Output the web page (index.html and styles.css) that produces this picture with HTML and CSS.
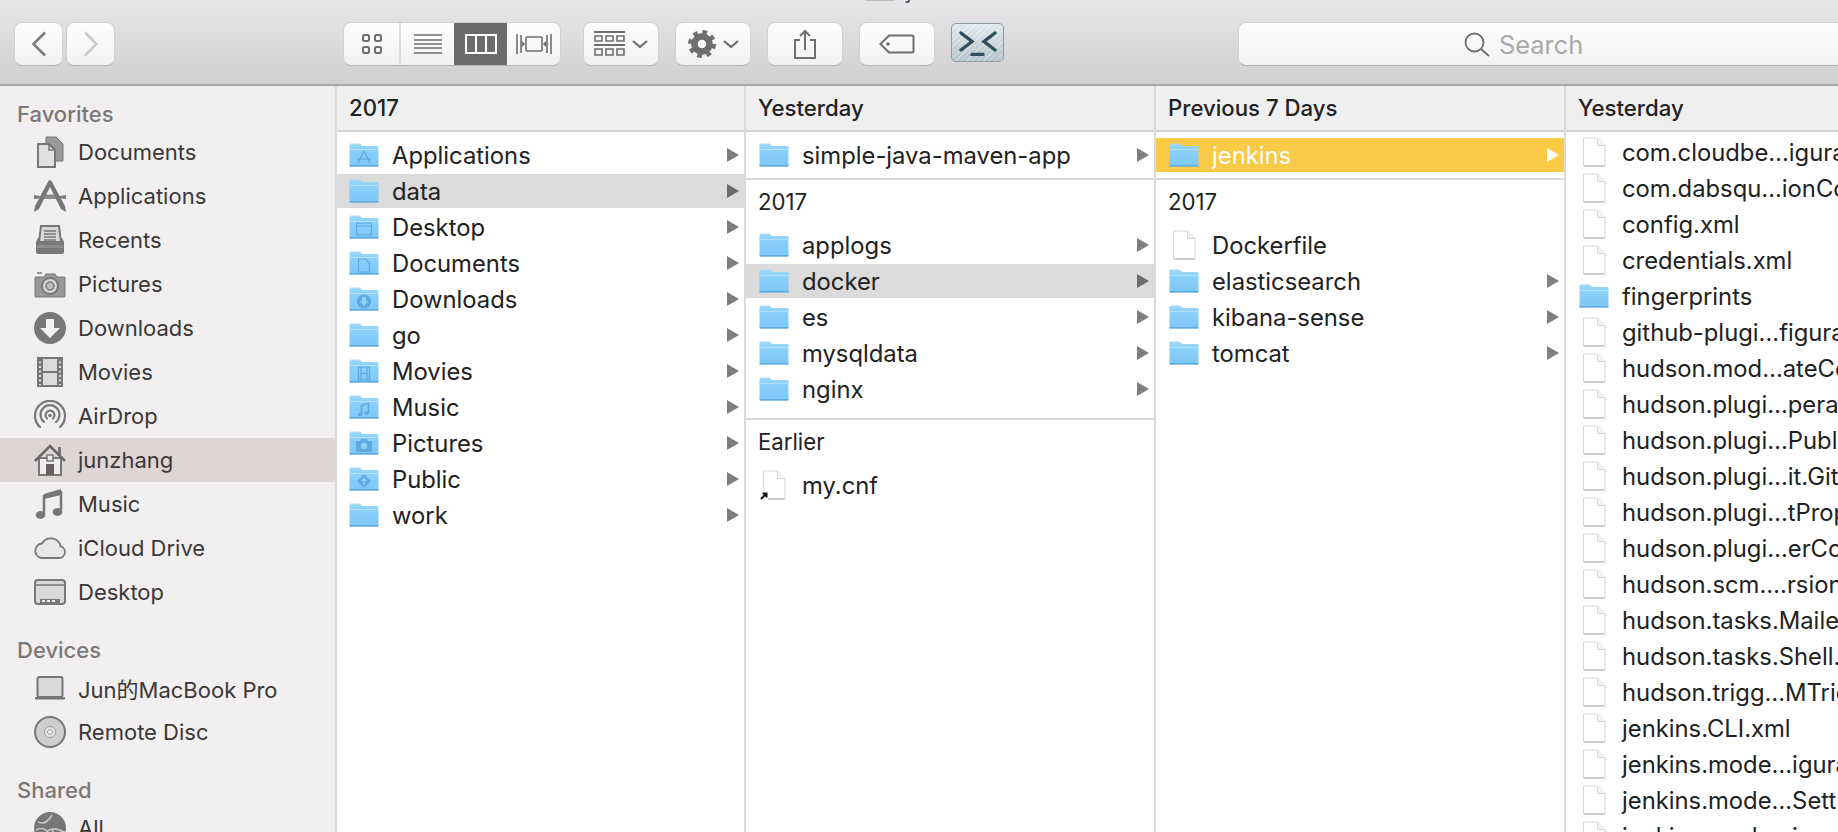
FILE: index.html
```html
<!DOCTYPE html>
<html lang="en">
<head>
  <meta charset="UTF-8">
  <title>Finder</title>
  <link rel="stylesheet" href="styles.css">
</head>
<body>
  <svg class="sprite" width="0" height="0">
    <defs>
      <linearGradient id="blue" x1="0" y1="0" x2="0" y2="1">
        <stop offset="0" stop-color="#a5dbfb"/>
        <stop offset="0.2" stop-color="#8ed2fa"/>
        <stop offset="1" stop-color="#7cc6f7"/>
      </linearGradient>
      <!-- folders -->
      <symbol id="folder" viewBox="0 0 30 24">
        <path d="M0.5 22.5V2a1.5 1.5 0 0 1 1.5-1.5h8.5L13.5 3H28.5A1 1 0 0 1 29.5 4V22.5a1 1 0 0 1-1 1H1.5a1 1 0 0 1-1-1z" fill="url(#blue)"/>
        <path d="M0.5 6.5H29.5" stroke="#b4e1fb" stroke-width="1"/>
        <path d="M0.5 22.8H29.5" stroke="#5fa6d8" stroke-width="1.4"/>
      </symbol>
      <symbol id="folder-app" viewBox="0 0 30 24">
        <use href="#folder"/>
        <path d="M15 8L9 20M15 8l6 12M8 16h14" fill="none" stroke="#5da9e6" stroke-width="1.2"/>
      </symbol>
      <symbol id="folder-desktop" viewBox="0 0 30 24">
        <use href="#folder"/>
        <path d="M7.5 8h15v12h-15zM7.5 11h15" fill="none" stroke="#5da9e6" stroke-width="1.2"/>
      </symbol>
      <symbol id="folder-docs" viewBox="0 0 30 24">
        <use href="#folder"/>
        <path d="M9.5 8h7l4 4v9h-11z" fill="none" stroke="#5da9e6" stroke-width="1.2"/>
      </symbol>
      <symbol id="folder-down" viewBox="0 0 30 24">
        <use href="#folder"/>
        <circle cx="15" cy="14.5" r="7" fill="#5da9e6"/>
        <path d="M13 10h4v4h2.5L15 19l-4.500-5H13z" fill="#8ed2fa"/>
      </symbol>
      <symbol id="folder-movies" viewBox="0 0 30 24">
        <use href="#folder"/>
        <path d="M9.500 8h11v13h-11zM12 8v13M18 8v13M12 14.500h6" fill="none" stroke="#5da9e6" stroke-width="1.200"/>
      </symbol>
      <symbol id="folder-music" viewBox="0 0 30 24">
        <use href="#folder"/>
        <path d="M12.500 10l7-1.500v9M12.500 10v9" fill="none" stroke="#5da9e6" stroke-width="1.500"/>
        <ellipse cx="11" cy="19.500" rx="2.300" ry="1.800" fill="#5da9e6"/>
        <ellipse cx="18" cy="18" rx="2.300" ry="1.800" fill="#5da9e6"/>
      </symbol>
      <symbol id="folder-pics" viewBox="0 0 30 24">
        <use href="#folder"/>
        <path d="M7 10h4l1-2h6l1 2h4v11H7z" fill="#5da9e6"/>
        <circle cx="15" cy="15" r="3.800" fill="#8ed2fa" stroke="#5da9e6"/>
      </symbol>
      <symbol id="folder-public" viewBox="0 0 30 24">
        <use href="#folder"/>
        <path d="M15 7l7 7-7 7-7-7z" fill="#5da9e6"/>
        <path d="M15 10.500v7M12.500 14l2.500-2 2.500 2" fill="none" stroke="#a5dbfb" stroke-width="1.200"/>
      </symbol>
      <!-- files -->
      <symbol id="file" viewBox="0 0 24 30">
        <path d="M1.500 1h14L23 8.500V28.500H1.500z" fill="#fff" stroke="#d6d6d6"/>
        <path d="M15.500 1v7.500H23" fill="#f3f3f3" stroke="#d6d6d6"/>
        <path d="M1.500 29.300H23" stroke="#bdbdbd"/>
      </symbol>
      <symbol id="file-alias" viewBox="0 0 30 30">
        <use href="#file" x="3" width="24" height="30"/>
        <rect x="0" y="21" width="9" height="9" fill="#fff"/>
        <path d="M2 29l5-5M3.500 23.500H7.500V27.500" fill="none" stroke="#111" stroke-width="2"/>
      </symbol>
      <!-- sidebar -->
      <symbol id="s-docs" viewBox="0 0 32 32">
        <path d="M12 1h10l7 7v17h-8V13l-6-5h-3z" fill="#9a9a9a" stroke="#777"/>
        <path d="M4 8h11l6 6v17H4z" fill="#e2e0e0" stroke="#777" stroke-width="2"/>
        <path d="M15 8v6h6" fill="none" stroke="#777" stroke-width="1.500"/>
      </symbol>
      <symbol id="s-apps" viewBox="0 0 32 32">
        <path d="M0 15l8 1.500h16l8-1.500v4l-8-1H8l-8 1z" fill="#777"/>
        <path d="M10 14.500h12l2 4.500H8z" fill="#8a8a8a"/>
        <path d="M15 0l3 3L5 29l-5 3 1-6z" fill="#777"/>
        <path d="M17 0l-3 3 13 26 5 3-1-6z" fill="#777"/>
      </symbol>
      <symbol id="s-recents" viewBox="0 0 32 32">
        <path d="M7 2h18l2 16H5z" fill="#d8d6d6" stroke="#777" stroke-width="2"/>
        <path d="M10 7h12M10 10h12M10 13h12M10 16h12" stroke="#777" stroke-width="1.300"/>
        <path d="M4 14h2v5h20v-5h2l2 4v10a2 2 0 0 1-2 2H4a2 2 0 0 1-2-2V18z" fill="#777"/>
        <path d="M3 21h26v3H3z" fill="#8d8d8d"/>
      </symbol>
      <symbol id="s-camera" viewBox="0 0 32 32">
        <path d="M2 9h8l2-3h9l2 3h7a1 1 0 0 1 1 1v18a1 1 0 0 1-1 1H2a1 1 0 0 1-1-1V10a1 1 0 0 1 1-1z" fill="#989898" stroke="#777"/>
        <path d="M3 5h5" stroke="#777" stroke-width="1.500"/>
        <circle cx="16" cy="18" r="8" fill="#dcdada" stroke="#777" stroke-width="2"/>
        <circle cx="16" cy="18" r="4" fill="#bbb" stroke="#777" stroke-width="1.500"/>
      </symbol>
      <symbol id="s-down" viewBox="0 0 32 32">
        <circle cx="16" cy="16" r="16" fill="#777"/>
        <path d="M12 7h8v9h6L16 26 6 16h6z" fill="#f3f1f1"/>
      </symbol>
      <symbol id="s-movies" viewBox="0 0 32 32">
        <path d="M4 2h24v28H4z" fill="#dcdada" stroke="#777" stroke-width="2"/>
        <path d="M8 2v28M24 2v28M8 16h16" stroke="#777" stroke-width="2"/>
        <path d="M6 3v26M26 3v26" stroke="#777" stroke-width="2.500" stroke-dasharray="2.500 2"/>
      </symbol>
      <symbol id="s-airdrop" viewBox="0 0 32 32">
        <g fill="none" stroke="#777" stroke-width="2.200" stroke-linecap="round">
          <path d="M6 27A15 15 0 1 1 26 27"/>
          <path d="M10 22A9.500 9.500 0 1 1 22 22"/>
          <path d="M13 18.500A4.500 4.500 0 1 1 19 18.500"/>
        </g>
        <circle cx="16" cy="15.500" r="1.800" fill="#777"/>
      </symbol>
      <symbol id="s-home" viewBox="0 0 32 32">
        <path d="M5 14h22v17H5z" fill="#efeded" stroke="#777" stroke-width="2"/>
        <path d="M24 3h3v8h-3z" fill="#777"/>
        <path d="M1 17L16 2l15 15" fill="none" stroke="#666" stroke-width="2.500"/>
        <path d="M13 11h6v6h-6z" fill="#efeded" stroke="#777" stroke-width="1.500"/>
        <path d="M12 20h8v11h-8z" fill="#6a6060"/>
      </symbol>
      <symbol id="s-music" viewBox="0 0 32 32">
        <path d="M10 6L27 1v6L10 11z" fill="#777"/>
        <path d="M10 7v19M27 3v19" stroke="#777" stroke-width="2.500"/>
        <ellipse cx="6.500" cy="27" rx="4.800" ry="3.900" fill="#777"/>
        <ellipse cx="23.500" cy="24" rx="4.800" ry="3.900" fill="#777"/>
      </symbol>
      <symbol id="s-cloud" viewBox="0 0 32 32">
        <path d="M7.500 26H25a6 6 0 0 0 1.500-11.800A10 10 0 0 0 8 11.500 7.300 7.300 0 0 0 7.500 26z" fill="#e8e6e6" stroke="#777" stroke-width="1.800"/>
      </symbol>
      <symbol id="s-desktop" viewBox="0 0 32 32">
        <rect x="1" y="4" width="30" height="24" rx="3" fill="#dad8d8" stroke="#777" stroke-width="2"/>
        <path d="M2 9h28" stroke="#777" stroke-width="1.500"/>
        <path d="M6 23h20v4H6z" fill="#777"/>
        <path d="M8 24h3v2H8zM13 24h3v2h-3zM18 24h3v2h-3z" fill="#f1efef"/>
      </symbol>
      <symbol id="s-laptop" viewBox="0 0 32 32">
        <rect x="3.500" y="5" width="25" height="20" rx="2" fill="#dad8d8" stroke="#777" stroke-width="2"/>
        <path d="M1 25h30v1.500a1 1 0 0 1-1 1H2a1 1 0 0 1-1-1z" fill="#777"/>
      </symbol>
      <symbol id="s-disc" viewBox="0 0 32 32">
        <circle cx="16" cy="16" r="15" fill="#cfcdcd" stroke="#777" stroke-width="2"/>
        <circle cx="16" cy="16" r="5.500" fill="#ebe9e9" stroke="#999"/>
        <circle cx="16" cy="16" r="2.500" fill="#f1efef" stroke="#999"/>
      </symbol>
      <symbol id="s-globe" viewBox="0 0 32 32">
        <circle cx="16" cy="16" r="16" fill="#777"/>
        <path d="M4 10c6 3 10 0 14-7M9 30c0-8 4-12 10-13s8 3 12 3M18 17l5 12M2 18c4-2 8-2 11 1" fill="none" stroke="#c9c7c7" stroke-width="1.600"/>
      </symbol>
      <!-- arrow for rows -->
      <symbol id="arrow" viewBox="0 0 12 14">
        <path d="M0 0L12 7 0 14z" fill="currentColor"/>
      </symbol>
    </defs>
  </svg>

  <div class="window">
    <header class="toolbar">
      <span class="title-icon"></span>
      <span class="title-text">y</span>

      <div class="nav-pair">
        <button class="btn nav-btn">
          <svg width="16" height="26" viewBox="0 0 16 26"><path d="M14 1.500L2.500 13 14 24.500" fill="none" stroke="#7d7d7d" stroke-width="2.600"/></svg>
        </button>
        <button class="btn nav-btn">
          <svg width="16" height="26" viewBox="0 0 16 26"><path d="M2 1.500L13.500 13 2 24.500" fill="none" stroke="#c9c9c9" stroke-width="2.600"/></svg>
        </button>
      </div>

      <div class="btn views">
        <div class="view view-icon">
          <svg width="22" height="20" viewBox="0 0 22 20"><g fill="none" stroke="#6e6e6e" stroke-width="2"><rect x="2" y="1" width="6" height="6" rx="1.500"/><rect x="14" y="1" width="6" height="6" rx="1.500"/><rect x="2" y="13" width="6" height="6" rx="1.500"/><rect x="14" y="13" width="6" height="6" rx="1.500"/></g></svg>
        </div>
        <div class="view view-list">
          <svg width="28" height="20" viewBox="0 0 28 20"><path d="M0 1h28M0 6h28M0 10h28M0 14h28M0 19h28" stroke="#6e6e6e" stroke-width="1.600"/></svg>
        </div>
        <div class="view view-cols">
          <svg width="32" height="20" viewBox="0 0 32 20"><path d="M1 1h30v18H1zM11 1v18M21 1v18" fill="none" stroke="#fff" stroke-width="2"/></svg>
        </div>
        <div class="view view-flow">
          <svg width="36" height="20" viewBox="0 0 36 20"><g fill="none" stroke="#6e6e6e" stroke-width="1.600"><path d="M1 0v20M5 1v18M31 1v18M35 0v20"/><rect x="10" y="3" width="16" height="14" rx="1"/></g><path d="M6 7l3 3-3 3zM30 7l-3 3 3 3z" fill="#6e6e6e"/></svg>
        </div>
      </div>

      <button class="btn tool tool-group">
        <svg width="31" height="26" viewBox="0 0 31 26"><g fill="none" stroke="#6e6e6e"><path d="M0 1h31M0 14h31" stroke-width="1.800"/><path d="M1 5h7v5H1zM12 5h7v5h-7zM23 5h7v5h-7zM1 18h7v6H1zM12 18h7v6h-7zM23 18h7v6h-7z" stroke-width="1.600"/></g></svg>
        <svg class="chev" width="16" height="8" viewBox="0 0 16 8"><path d="M1 1l7 6 7-6" fill="none" stroke="#6e6e6e" stroke-width="2.200"/></svg>
      </button>
      <button class="btn tool tool-gear">
        <svg width="28" height="28" viewBox="0 0 28 28"><circle cx="14" cy="14" r="7.500" fill="none" stroke="#6e6e6e" stroke-width="6.500"/><circle cx="14" cy="14" r="11.500" fill="none" stroke="#6e6e6e" stroke-width="5" stroke-dasharray="4.500 4.530"/></svg>
        <svg class="chev" width="16" height="8" viewBox="0 0 16 8"><path d="M1 1l7 6 7-6" fill="none" stroke="#6e6e6e" stroke-width="2.200"/></svg>
      </button>
      <button class="btn tool">
        <svg width="24" height="30" viewBox="0 0 24 30"><path d="M7 11H2v18h20V11h-5M12 21V2M7 7l5-5 5 5" fill="none" stroke="#6e6e6e" stroke-width="2"/></svg>
      </button>
      <button class="btn tool">
        <svg width="36" height="20" viewBox="0 0 36 20"><path d="M10 1.500h23a1.500 1.500 0 0 1 1.500 1.500v14a1.500 1.500 0 0 1-1.500 1.500H10L1.500 10z" fill="none" stroke="#6e6e6e" stroke-width="2"/><circle cx="9" cy="10" r="1.800" fill="#6e6e6e"/></svg>
      </button>
      <button class="terminal">
        <svg width="38" height="26" viewBox="0 0 38 26"><g fill="none" stroke="#2f4f5e" stroke-width="3.400" stroke-linecap="round"><path d="M2 3l11 8.500L2 20M36 3L25 11.500 36 20"/><path d="M13 24.500h11"/></g></svg>
      </button>

      <div class="search">
        <svg width="26" height="25" viewBox="0 0 26 25"><circle cx="10.500" cy="10.500" r="9" fill="none" stroke="#6f6f6f" stroke-width="1.800"/><path d="M17 17l8 7" stroke="#6f6f6f" stroke-width="2"/></svg>
        <span>Search</span>
      </div>
    </header>

    <div class="main">
      <nav class="sidebar">
        <div class="side-label">Favorites</div>
        <div class="side-item"><svg class="side-icon"><use href="#s-docs"/></svg>Documents</div>
        <div class="side-item"><svg class="side-icon"><use href="#s-apps"/></svg>Applications</div>
        <div class="side-item"><svg class="side-icon"><use href="#s-recents"/></svg>Recents</div>
        <div class="side-item"><svg class="side-icon"><use href="#s-camera"/></svg>Pictures</div>
        <div class="side-item"><svg class="side-icon"><use href="#s-down"/></svg>Downloads</div>
        <div class="side-item"><svg class="side-icon"><use href="#s-movies"/></svg>Movies</div>
        <div class="side-item"><svg class="side-icon"><use href="#s-airdrop"/></svg>AirDrop</div>
        <div class="side-item current"><svg class="side-icon"><use href="#s-home"/></svg>junzhang</div>
        <div class="side-item"><svg class="side-icon"><use href="#s-music"/></svg>Music</div>
        <div class="side-item"><svg class="side-icon"><use href="#s-cloud"/></svg>iCloud Drive</div>
        <div class="side-item"><svg class="side-icon"><use href="#s-desktop"/></svg>Desktop</div>

        <div class="side-label later">Devices</div>
        <div class="side-item"><svg class="side-icon"><use href="#s-laptop"/></svg>Jun的MacBook Pro</div>
        <div class="side-item"><svg class="side-icon"><use href="#s-disc"/></svg>Remote Disc</div>

        <div class="side-label later">Shared</div>
        <div class="side-item"><svg class="side-icon"><use href="#s-globe"/></svg>All</div>
      </nav>

      <section class="col first">
        <div class="col-head">2017</div>
        <div class="rows">
          <div class="row"><svg class="ico"><use href="#folder-app"/></svg><span class="name">Applications</span><svg class="arr"><use href="#arrow"/></svg></div>
          <div class="row open"><svg class="ico"><use href="#folder"/></svg><span class="name">data</span><svg class="arr"><use href="#arrow"/></svg></div>
          <div class="row"><svg class="ico"><use href="#folder-desktop"/></svg><span class="name">Desktop</span><svg class="arr"><use href="#arrow"/></svg></div>
          <div class="row"><svg class="ico"><use href="#folder-docs"/></svg><span class="name">Documents</span><svg class="arr"><use href="#arrow"/></svg></div>
          <div class="row"><svg class="ico"><use href="#folder-down"/></svg><span class="name">Downloads</span><svg class="arr"><use href="#arrow"/></svg></div>
          <div class="row"><svg class="ico"><use href="#folder"/></svg><span class="name">go</span><svg class="arr"><use href="#arrow"/></svg></div>
          <div class="row"><svg class="ico"><use href="#folder-movies"/></svg><span class="name">Movies</span><svg class="arr"><use href="#arrow"/></svg></div>
          <div class="row"><svg class="ico"><use href="#folder-music"/></svg><span class="name">Music</span><svg class="arr"><use href="#arrow"/></svg></div>
          <div class="row"><svg class="ico"><use href="#folder-pics"/></svg><span class="name">Pictures</span><svg class="arr"><use href="#arrow"/></svg></div>
          <div class="row"><svg class="ico"><use href="#folder-public"/></svg><span class="name">Public</span><svg class="arr"><use href="#arrow"/></svg></div>
          <div class="row"><svg class="ico"><use href="#folder"/></svg><span class="name">work</span><svg class="arr"><use href="#arrow"/></svg></div>
        </div>
      </section>

      <section class="col">
        <div class="col-head">Yesterday</div>
        <div class="rows">
          <div class="row"><svg class="ico"><use href="#folder"/></svg><span class="name">simple-java-maven-app</span><svg class="arr"><use href="#arrow"/></svg></div>
        </div>
        <div class="rows divided">
          <div class="group-label">2017</div>
          <div class="row"><svg class="ico"><use href="#folder"/></svg><span class="name">applogs</span><svg class="arr"><use href="#arrow"/></svg></div>
          <div class="row open"><svg class="ico"><use href="#folder"/></svg><span class="name">docker</span><svg class="arr"><use href="#arrow"/></svg></div>
          <div class="row"><svg class="ico"><use href="#folder"/></svg><span class="name">es</span><svg class="arr"><use href="#arrow"/></svg></div>
          <div class="row"><svg class="ico"><use href="#folder"/></svg><span class="name">mysqldata</span><svg class="arr"><use href="#arrow"/></svg></div>
          <div class="row"><svg class="ico"><use href="#folder"/></svg><span class="name">nginx</span><svg class="arr"><use href="#arrow"/></svg></div>
        </div>
        <div class="rows divided">
          <div class="group-label">Earlier</div>
          <div class="row"><svg class="ico"><use href="#file-alias"/></svg><span class="name">my.cnf</span></div>
        </div>
      </section>

      <section class="col">
        <div class="col-head">Previous 7 Days</div>
        <div class="rows">
          <div class="row selected"><svg class="ico"><use href="#folder"/></svg><span class="name">jenkins</span><svg class="arr"><use href="#arrow"/></svg></div>
        </div>
        <div class="rows divided">
          <div class="group-label">2017</div>
          <div class="row"><svg class="ico"><use href="#file"/></svg><span class="name">Dockerfile</span></div>
          <div class="row"><svg class="ico"><use href="#folder"/></svg><span class="name">elasticsearch</span><svg class="arr"><use href="#arrow"/></svg></div>
          <div class="row"><svg class="ico"><use href="#folder"/></svg><span class="name">kibana-sense</span><svg class="arr"><use href="#arrow"/></svg></div>
          <div class="row"><svg class="ico"><use href="#folder"/></svg><span class="name">tomcat</span><svg class="arr"><use href="#arrow"/></svg></div>
        </div>
      </section>

      <section class="col last">
        <div class="col-head">Yesterday</div>
        <div class="rows">
          <div class="row"><svg class="ico"><use href="#file"/></svg><span class="name">com.cloudbe…igura</span></div>
          <div class="row"><svg class="ico"><use href="#file"/></svg><span class="name">com.dabsqu…ionCo</span></div>
          <div class="row"><svg class="ico"><use href="#file"/></svg><span class="name">config.xml</span></div>
          <div class="row"><svg class="ico"><use href="#file"/></svg><span class="name">credentials.xml</span></div>
          <div class="row"><svg class="ico"><use href="#folder"/></svg><span class="name">fingerprints</span></div>
          <div class="row"><svg class="ico"><use href="#file"/></svg><span class="name">github-plugi…figura</span></div>
          <div class="row"><svg class="ico"><use href="#file"/></svg><span class="name">hudson.mod…ateCo</span></div>
          <div class="row"><svg class="ico"><use href="#file"/></svg><span class="name">hudson.plugi…pera</span></div>
          <div class="row"><svg class="ico"><use href="#file"/></svg><span class="name">hudson.plugi…Publ</span></div>
          <div class="row"><svg class="ico"><use href="#file"/></svg><span class="name">hudson.plugi…it.Git</span></div>
          <div class="row"><svg class="ico"><use href="#file"/></svg><span class="name">hudson.plugi…tProp</span></div>
          <div class="row"><svg class="ico"><use href="#file"/></svg><span class="name">hudson.plugi…erCo</span></div>
          <div class="row"><svg class="ico"><use href="#file"/></svg><span class="name">hudson.scm.…rsion</span></div>
          <div class="row"><svg class="ico"><use href="#file"/></svg><span class="name">hudson.tasks.Maile</span></div>
          <div class="row"><svg class="ico"><use href="#file"/></svg><span class="name">hudson.tasks.Shell.</span></div>
          <div class="row"><svg class="ico"><use href="#file"/></svg><span class="name">hudson.trigg…MTrig</span></div>
          <div class="row"><svg class="ico"><use href="#file"/></svg><span class="name">jenkins.CLI.xml</span></div>
          <div class="row"><svg class="ico"><use href="#file"/></svg><span class="name">jenkins.mode…igura</span></div>
          <div class="row"><svg class="ico"><use href="#file"/></svg><span class="name">jenkins.mode…Sett</span></div>
          <div class="row"><svg class="ico"><use href="#file"/></svg><span class="name">jenkins.mode…igura</span></div>
        </div>
      </section>
    </div>
  </div>
</body>
</html>
```

FILE: styles.css
```css
html, body { margin: 0; height: 100%; overflow: hidden; }
body { font-family: Inter, "Noto Sans CJK SC", sans-serif; color: #222; background: #fff; }
button { font: inherit; padding: 0; }
.sprite { display: block; }
.window { height: 832px; overflow: hidden; display: flex; flex-direction: column; }

/* toolbar */
.toolbar {
  position: relative;
  flex: none;
  box-sizing: border-box;
  height: 86px;
  padding: 22px 0 0 14px;
  display: flex;
  align-items: flex-start;
  overflow: hidden;
  background: linear-gradient(#e8e6e8, #d0ced0);
  border-bottom: 2px solid #a8a6a8;
}
.toolbar > * { flex: none; }
.title-icon { position: absolute; left: 865px; top: 0; width: 30px; height: 1px; background: #bdbbbd; }
.title-text { position: absolute; left: 904px; top: -20px; font-size: 20px; line-height: 24px; color: #444; }

.btn {
  box-sizing: border-box;
  height: 44px;
  border: 1px solid #d2d0d2;
  border-bottom-color: #b4b2b4;
  border-radius: 8px;
  background: linear-gradient(#fefefe, #f1f1f1);
  display: flex;
  align-items: center;
  justify-content: center;
}
.nav-pair { display: flex; gap: 3px; }
.nav-btn { width: 49px; }

.views { width: 218px; margin-left: 228px; overflow: hidden; justify-content: flex-start; }
.view { height: 44px; display: flex; align-items: center; justify-content: center; flex: none; box-sizing: border-box; }
.view-icon { width: 57px; border-right: 2px solid #dcdcdc; }
.view-list { width: 53px; }
.view-cols { width: 53px; background: #6b6b6b; }
.view-flow { width: 53px; }

.tool { width: 76px; margin-left: 16px; gap: 7px; }
.tool-group { margin-left: 22px; gap: 7px; }
.chev { flex: none; }

.terminal {
  box-sizing: border-box;
  width: 53px;
  height: 39px;
  margin: 1px 0 0 16px;
  border: 1px solid #8f9ca3;
  border-radius: 5px;
  background:
    repeating-linear-gradient(135deg, rgba(255,255,255,.35) 0 1px, transparent 1px 4px),
    linear-gradient(#e0e9ed, #b4c3ca);
  display: flex;
  align-items: center;
  justify-content: center;
}

.search {
  box-sizing: border-box;
  width: 640px;
  height: 44px;
  margin-left: 234px;
  padding-left: 225px;
  border: 1px solid #d2d0d2;
  border-bottom-color: #aeacae;
  border-radius: 8px;
  background: linear-gradient(#fefefe, #f2f2f2);
  display: flex;
  align-items: center;
  gap: 9px;
  color: #a9a9a9;
  font-size: 25.4px;
}

/* main area */
.main { flex: 1; display: flex; min-height: 0; }

.sidebar {
  flex: none;
  width: 335px;
  background: #f1efef;
  border-right: 2px solid #dcdada;
  font-size: 22px;
  color: #3a3838;
}
.side-label {
  box-sizing: border-box;
  height: 44px;
  padding: 16px 0 4px 17px;
  line-height: 24px;
  font-size: 22px;
  font-weight: 500;
  color: #7c7878;
}
.side-label.later { margin-top: 8px; }
.side-item { height: 44px; display: flex; align-items: center; gap: 12px; padding-left: 34px; }
.side-item.current { background: #ded6d5; }
.side-icon { width: 32px; height: 32px; flex: none; }

.col {
  flex: none;
  box-sizing: border-box;
  width: 410px;
  border-right: 2px solid #dadada;
  font-size: 23.8px;
  overflow: hidden;
}
.col.first { width: 409px; }
.col.last { flex: 1; border-right: 0; }
.col-head {
  box-sizing: border-box;
  height: 46px;
  padding-left: 12px;
  line-height: 44px;
  font-size: 22.2px;
  font-weight: 500;
  background: #efefef;
  border-bottom: 2px solid #d2d2d2;
}
.rows { padding-top: 6px; }
.last .rows { padding-top: 3px; }
.rows.divided { margin-top: 6px; padding: 0 0 4px; border-top: 2px solid #dadada; }
.group-label { height: 44px; margin-bottom: 4px; padding-left: 12px; line-height: 44px; font-size: 22.2px; }

.row {
  height: 34px;
  margin-bottom: 2px;
  padding: 0 5px 0 13px;
  display: flex;
  align-items: center;
  color: #7e7e7e;
}
.first .row { padding-left: 12px; }
.row.open { background: #dbdbdb; color: #6b6b6b; }
.row.selected { background: #f8ca45; color: #fff; }
.ico { width: 30px; height: 30px; flex: none; }
.name { flex: 1; margin-left: 13px; color: #222; white-space: nowrap; }
.selected .name { color: #fff; }
.arr { width: 12px; height: 14px; flex: none; }
```
